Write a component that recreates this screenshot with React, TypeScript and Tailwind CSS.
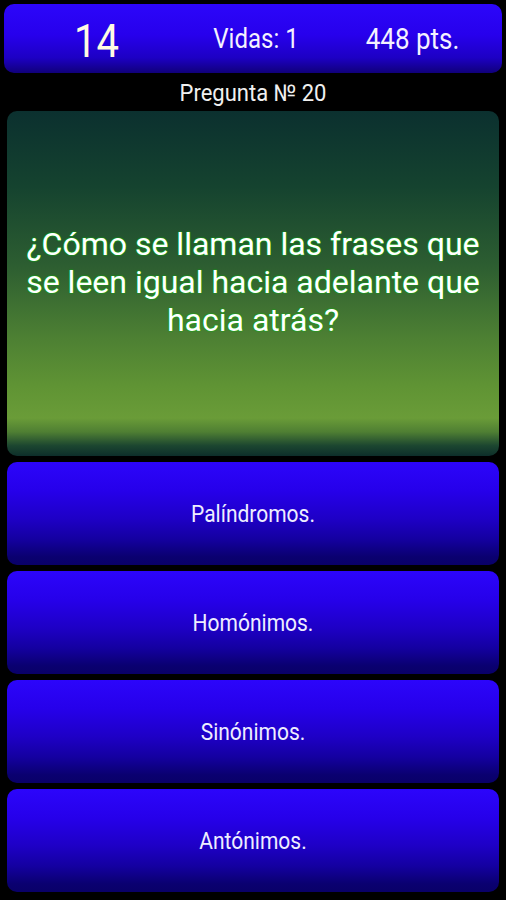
export default function App() {
  const answers = ['Palíndromos.', 'Homónimos.', 'Sinónimos.', 'Antónimos.'];

  return (
    <div className="w-[506px] h-[900px] bg-black overflow-hidden font-['Roboto','Liberation_Sans',sans-serif]">
      {/* Header */}
      <div className="mx-[4px] mt-[4px] h-[69px] rounded-[10px] bg-[linear-gradient(to_bottom,#2c06fa_0%,#2700ec_45%,#1d00c4_78%,#10007a_100%)] grid grid-cols-[183px_150px_1fr] items-center">
        <span className="text-center text-[40px] leading-none text-[#fffbe3] pl-[2px] mt-[6px] scale-y-[1.15]">14</span>
        <span className="text-center text-[24px] leading-none text-[#f4f2ff] pr-[12px] scale-y-[1.15]">Vidas: 1</span>
        <span className="text-center text-[26px] leading-none text-[#f4f2ff] pr-[14px] scale-y-[1.15]">448 pts.</span>
      </div>

      <div className="h-[38px] flex items-center justify-center text-[22px] text-[#f0f0f0] scale-y-105 pt-[2px]">
        Pregunta № 20
      </div>

      {/* Question */}
      <div className="mx-[7px] h-[345px] rounded-[10px] bg-[linear-gradient(to_bottom,#0b302f_0%,#15432f_22%,#2d5e31_45%,#4c7f33_65%,#609434_80%,#6a9c38_89%,#4f7f33_93%,#1c4630_97%,#0d2e2a_100%)] flex items-center justify-center px-[14px] pb-[3px]">
        <p className="text-center text-[32px] leading-[38px] text-white [text-shadow:0_0_2px_#10b014,0_0_1px_#10b014,0_0_1px_#10b014]">
          ¿Cómo se llaman las frases que se leen igual hacia adelante que hacia atrás?
        </p>
      </div>

      {/* Answers */}
      <div className="mx-[7px] mt-[6px] flex flex-col gap-[6px]">
        {answers.map((a) => (
          <div
            key={a}
            className="h-[103px] rounded-[10px] bg-[linear-gradient(to_bottom,#2c05fb_0%,#2600ea_28%,#1e00c6_55%,#1400a0_75%,#0a0070_92%,#090068_100%)] flex items-center justify-center"
          >
            <span className="text-[21px] text-[#eeeeff] mt-[3px] scale-y-110">{a}</span>
          </div>
        ))}
      </div>
    </div>
  );
}
